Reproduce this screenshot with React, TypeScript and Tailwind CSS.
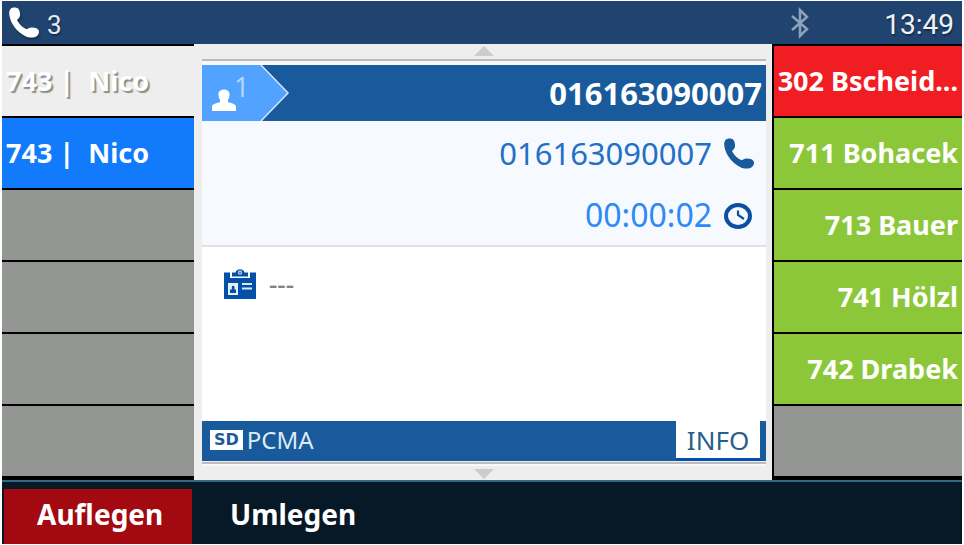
import React from "react";

const leftKeys = [
	{ label: "743 |  Nico", style: "bg-[#eeeeee] text-white [text-shadow:2px_2px_1px_#8a908a]" },
	{ label: "743 |  Nico", style: "bg-[#117bfb] text-white" },
	{ label: "", style: "bg-[#949693]" },
	{ label: "", style: "bg-[#949693]" },
	{ label: "", style: "bg-[#949693]" },
	{ label: "", style: "bg-[#949693]" },
];

const rightKeys = [
	{ label: "302 Bscheid...", style: "bg-[#f01e23]" },
	{ label: "711 Bohacek", style: "bg-[#8cc739]" },
	{ label: "713 Bauer", style: "bg-[#8cc739]" },
	{ label: "741 Hölzl", style: "bg-[#8cc739]" },
	{ label: "742 Drabek", style: "bg-[#8cc739]" },
	{ label: "", style: "bg-[#949693]" },
];

function Handset({ className }: { className: string }) {
	return (
		<svg viewBox="0 0 30 31" className={className} fill="currentColor" aria-hidden="true">
			<path d="M1.500 2C3 0 8 0 9.500 2C11.500 5 11.500 9 10 11C9 12 8 12.500 8.200 13.500C10 17 13.500 20.500 17 22C18 22.500 19 21.500 20.500 21C23 20 27.500 20.500 29.500 23C30.500 25 30 27.500 28 29C25 31 20 31 16 29C8 25 2 17 .500 9C0 6 0 4 1.500 2Z" />
		</svg>
	);
}

function Bluetooth() {
	return (
		<svg viewBox="0 0 18 32" className="h-8 w-[18px] text-[#8ea2b8]" fill="none" stroke="currentColor" strokeWidth="2.500" aria-hidden="true">
			<path d="M1 9L16 22L9 29V3L16 10L1 23" />
		</svg>
	);
}

function Clock() {
	return (
		<svg viewBox="0 0 30 28" className="h-7 w-[30px] text-[#0b4fa3]" fill="none" stroke="currentColor" aria-hidden="true">
			<ellipse cx="14" cy="15" rx="12" ry="11" strokeWidth="4" />
			<path d="M14 9.500V14L20 18" strokeWidth="2.200" />
		</svg>
	);
}

function Badge() {
	return (
		<svg viewBox="0 0 34 32" className="h-8 w-[34px]" fill="none" aria-hidden="true">
			<path d="M1 4.500H7V10H27V4.500H33V31H1Z" fill="#0450a8" />
			<path d="M9 4.500H12.500A4.800 4.800 0 0 1 21.500 4.500H25V8.500H9Z" fill="#0450a8" />
			<circle cx="17" cy="4.500" r="1.500" stroke="#a9c4e4" strokeWidth="1.500" />
			<path d="M5 15H15V27H5Z" fill="#e8f0fa" />
			<path d="M7 25V21.500H8.800V18.500A1.500 1.500 0 0 1 11.500 18.500V21.500H13V25Z" fill="#0450a8" />
			<path d="M19 16H29M19 20.500H29" stroke="#dce8f6" strokeWidth="2" />
		</svg>
	);
}

function App() {
	return (
		<div className="flex min-h-screen flex-col bg-white px-[2px] py-px font-['Noto_Sans','Open_Sans',sans-serif]">
			<header className="flex h-[43px] items-center justify-between bg-[#20446f] pr-2 pl-[7px] text-white">
				<div className="flex items-center gap-2">
					<Handset className="h-[31px] w-[30px] drop-shadow-[1px_2px_1px_#15304f]" />
					<span className="pt-1 font-['Roboto',sans-serif] text-[26px] leading-8 text-[#e4eaf0] [text-shadow:1px_2px_1px_#15304f]">
						3
					</span>
				</div>
				<div className="flex items-center gap-[75px]">
					<Bluetooth />
					<time className="pt-1 font-['Roboto',sans-serif] text-[28px] leading-8 text-[#eef2f6] [text-shadow:1px_2px_1px_#15304f]">
						13:49
					</time>
				</div>
			</header>

			<main className="grid flex-1 grid-cols-[192px_1fr_190px]">
				<nav className="flex flex-col gap-[2px] bg-black pt-[2px] pb-1">
					{leftKeys.map((key, i) => (
						<button
							key={i}
							aria-label={key.label || "Freie Taste"}
							className={"min-h-10 flex-1 whitespace-pre pl-1 text-left text-[27px] leading-8 font-bold " + key.style}
						>
							{key.label}
						</button>
					))}
				</nav>

				<section className="flex flex-col bg-[#eeeeee] pt-[2px] pr-[6px] pb-px pl-2">
					<svg viewBox="0 0 20 10" className="h-[10px] w-5 self-center text-[#cccccc]" fill="currentColor" aria-hidden="true">
						<path d="M10 0L20 10H0Z" />
					</svg>
					<div className="mt-[3px] h-[2px] bg-[#bbbbbb]" />
					<div className="h-1 bg-[#f8f8f8]" />
					<div className="flex h-14 items-stretch justify-between bg-[#185a9b] text-white">
						<div className="relative w-[88px]">
							<svg viewBox="0 0 88 56" className="h-14 w-[88px]" aria-hidden="true">
								<path d="M0 0H59L86 28L59 56H0Z" fill="#52a2ff" />
								<path d="M59 0L86 28L59 56" fill="none" stroke="#d4e6fa" strokeWidth="1.500" />
								<path d="M10 46V41.500C10 39 15 38 18 37V34.500C16.500 33 16.500 31 16.500 29C16.500 23 27.500 23 27.500 29C27.500 31 27.500 33 26 34.500V37C29 38 34 39 34 41.500V46Z" fill="#ffffff" />
							</svg>
							<span className="absolute top-[6px] left-8 text-[27px] leading-8 text-[#b5d7ff]">1</span>
						</div>
						<h1 className="self-center pr-1 text-[31px] leading-9 font-bold">016163090007</h1>
					</div>
					<div className="flex flex-col items-end border-b-2 border-[#e0e2e4] bg-[#f6faff] pr-3">
						<div className="flex h-16 items-center gap-3 text-[31px] text-[#2370c6]">
							016163090007
							<Handset className="h-[31px] w-[30px] text-[#185a9b]" />
						</div>
						<div className="flex h-[60px] items-center gap-3 text-[32px] text-[#2d89f5]">
							00:00:02
							<Clock />
						</div>
					</div>
					<div className="flex flex-1 items-start gap-3 bg-white px-[21px] pt-[21px]">
						<Badge />
						<span className="text-[26px] leading-8 font-medium text-[#7f857c]">---</span>
					</div>
					<div className="flex h-10 items-stretch justify-between bg-[#185a9b] pr-[6px] pl-2">
						<div className="flex items-center gap-1 pb-[2px] text-2xl text-[#dceaf2]">
							<span className="bg-white px-1 font-['DejaVu_Sans',sans-serif] text-base leading-5 font-bold text-[#185a9b]">
								SD
							</span>
							PCMA
						</div>
						<button className="w-[84px] border-b-[3px] border-[#0450b0] bg-white text-[26px] leading-8 text-[#285f8a]">
							INFO
						</button>
					</div>
					<div className="mt-px h-[2px] bg-[#bfbcc0]" />
					<div className="h-[2px] bg-[#f8f8f8]" />
					<svg viewBox="0 0 20 10" className="mt-[3px] h-[10px] w-5 self-center text-[#cccccc]" fill="currentColor" aria-hidden="true">
						<path d="M0 0H20L10 10Z" />
					</svg>
				</section>

				<nav className="flex flex-col gap-[2px] bg-black pt-[2px] pb-1 pl-[2px]">
					{rightKeys.map((key, i) => (
						<button
							key={i}
							aria-label={key.label || "Freie Taste"}
							className={"min-h-10 flex-1 whitespace-pre pr-1 text-right text-[27px] leading-8 font-bold text-white " + key.style}
						>
							{key.label}
						</button>
					))}
				</nav>
			</main>

			<footer className="flex h-16 border-t-2 border-[#34697f] bg-[#071826] px-[2px] pt-[7px] text-[28px] leading-8 font-bold text-white">
				<button className="w-[188px] bg-[#a30911] pb-[5px] pl-[33px] text-left">Auflegen</button>
				<button className="w-48 pb-[5px] pl-[38px] text-left">Umlegen</button>
			</footer>
		</div>
	);
}

export default App;
